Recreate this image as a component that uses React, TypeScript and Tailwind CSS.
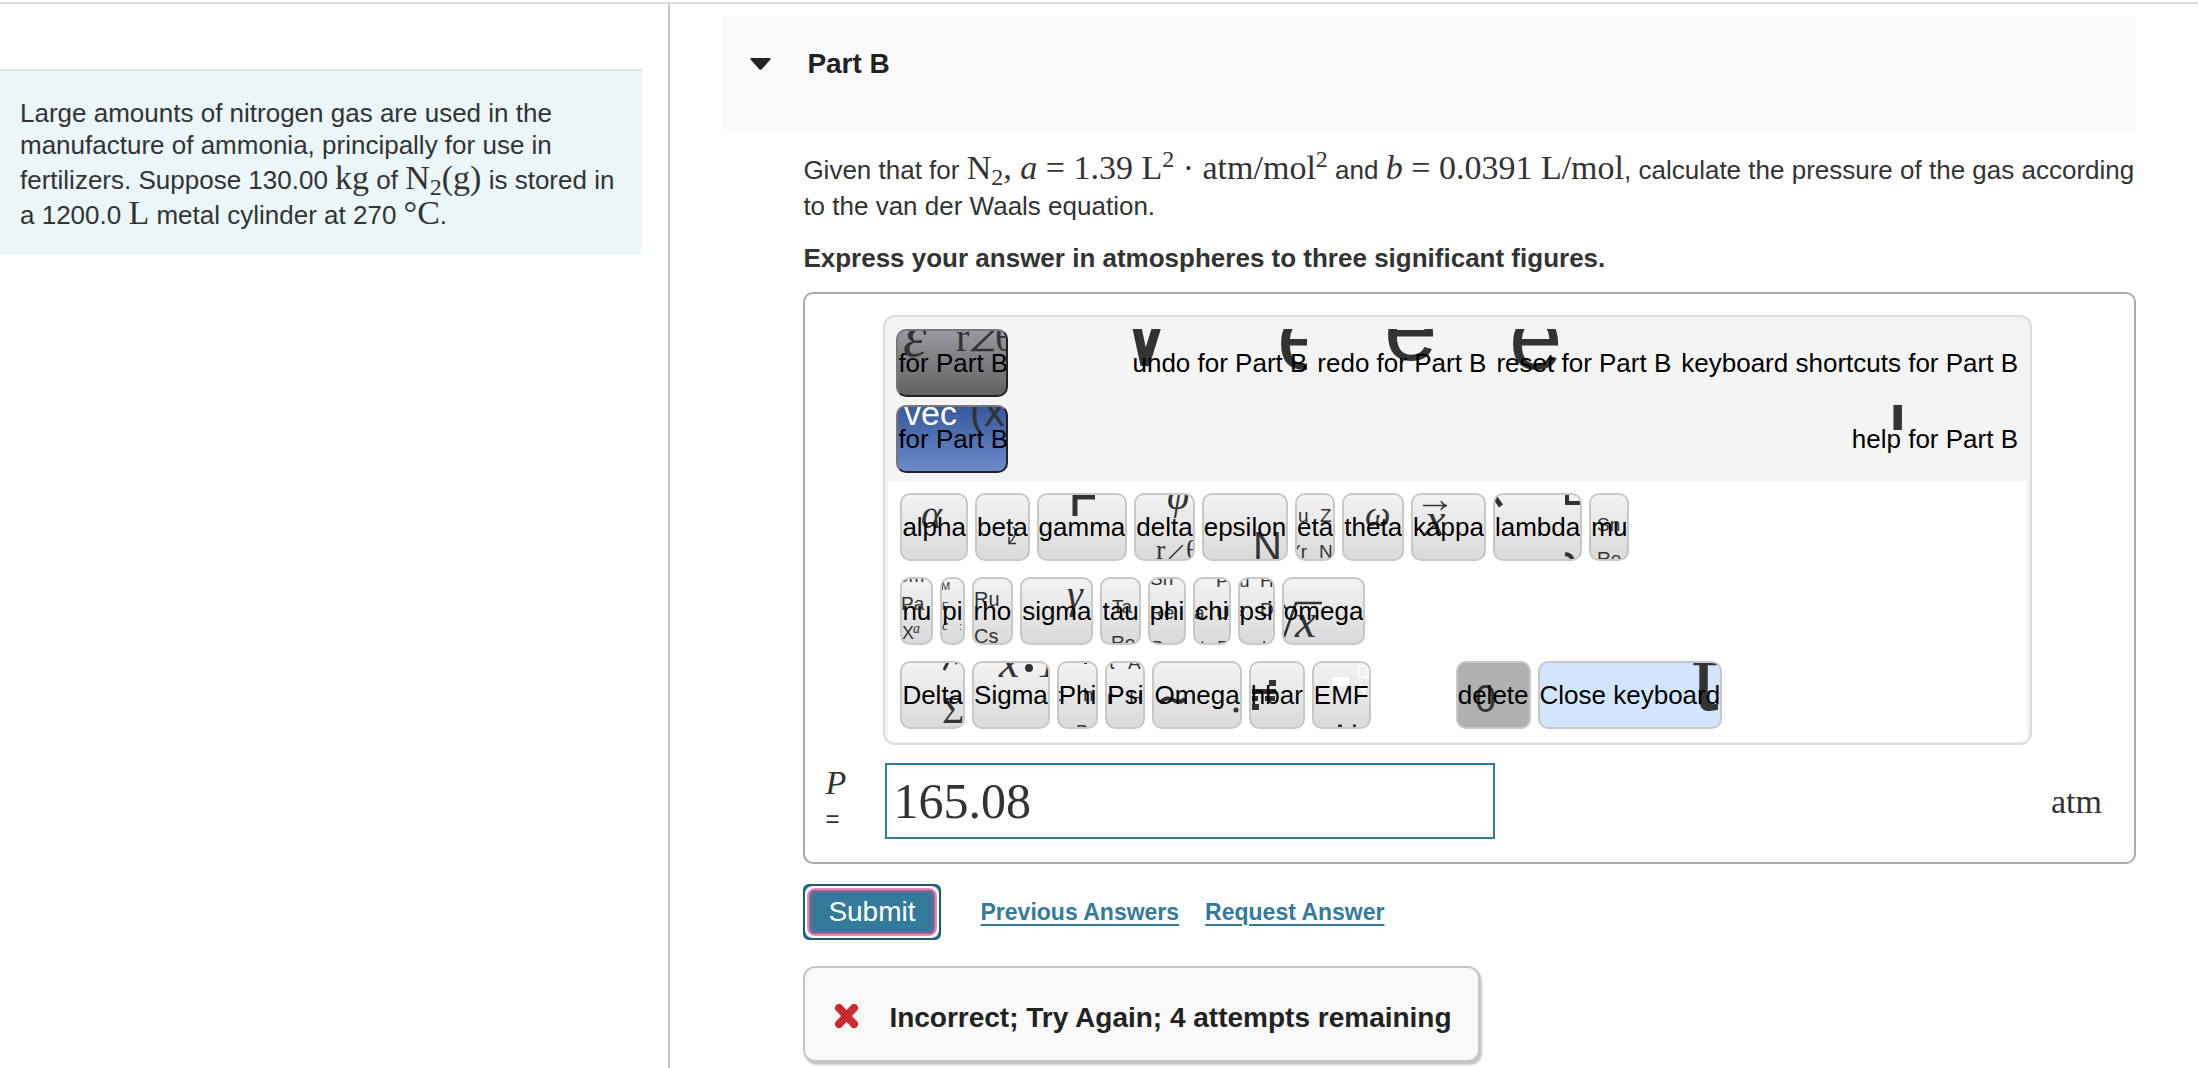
/**
 * Homework item page: problem statement on the left, answer part on the right
 * with the math keyboard, the answer field and the grading feedback.
 */
import { useState, type ReactNode } from "react";
import clsx from "clsx";

type Glyph = {
  text: string;
  x: number;
  y: number;
  size: number;
  font?: "serif" | "italic";
  fill?: string;
};

interface KeyDef {
  label: string;
  glyphs?: Glyph[];
  art?: ReactNode;
}

const INK = "#333333";

// Symbol artwork painted behind a key label. Clipped by the key itself.
function Sprite({ glyphs = [], art }: { glyphs?: Glyph[]; art?: ReactNode }) {
  return (
    <svg className="pointer-events-none absolute inset-0 h-full w-full" aria-hidden="true">
      {glyphs.map((g) => (
        <text
          key={`${g.text}-${g.x}-${g.y}`}
          x={g.x}
          y={g.y}
          fontSize={g.size}
          fill={g.fill ?? INK}
          fontFamily={g.font ? "Liberation Serif, serif" : "Liberation Sans, sans-serif"}
          fontStyle={g.font === "italic" ? "italic" : "normal"}
        >
          {g.text}
        </text>
      ))}
      <g fill="none" stroke={INK}>
        {art}
      </g>
    </svg>
  );
}

const tabs: (KeyDef & { tone: string })[] = [
  {
    label: "for Part B",
    tone: "from-[#9a98a0] to-[#626262]",
    glyphs: [
      { text: "ε", x: 5, y: 25, size: 60, font: "italic" },
      { text: "r", x: 58, y: 20, size: 40, font: "serif" },
      { text: "θ", x: 97, y: 20, size: 40, font: "serif" },
    ],
    art: <path d="M96 -1 L75 19 H96" strokeWidth="2.5" />,
  },
  {
    label: "for Part B",
    tone: "from-[#38599b] to-[#6b8bcb]",
    glyphs: [
      { text: "vec", x: 6, y: 18, size: 34, fill: "#ffffff" },
      { text: "(x", x: 72, y: 19, size: 42 },
    ],
  },
];

const tools: KeyDef[] = [
  {
    label: "undo for Part B",
    glyphs: [{ text: "e", x: 145, y: 40, size: 96 }],
    art: <path d="M5 -1 L13 36 L25 -3" strokeWidth="9" strokeLinejoin="bevel" />,
  },
  { label: "redo for Part B", glyphs: [{ text: "e", x: 67, y: 31, size: 96 }] },
  { label: "reset for Part B", glyphs: [{ text: "e", x: 13, y: 40, size: 96 }] },
  { label: "keyboard shortcuts for Part B" },
];

const helpTool: KeyDef = {
  label: "help for Part B",
  glyphs: [{ text: "l", x: 35, y: 25, size: 96 }],
};

const lowerRow: KeyDef[] = [
  { label: "alpha", glyphs: [{ text: "α", x: 19, y: 33, size: 40, font: "italic" }] },
  { label: "beta", art: <path d="M36 32 C41 36 38 43 32 48 M32 42 V48.5 H39" strokeWidth="1.5" /> },
  { label: "gamma", art: <path d="M36 21 V2 H56" strokeWidth="5" /> },
  {
    label: "delta",
    glyphs: [
      { text: "φ", x: 31, y: 14, size: 40, font: "italic" },
      { text: "r", x: 20, y: 64, size: 28, font: "serif" },
      { text: "θ", x: 50, y: 64, size: 28, font: "serif" },
    ],
    art: <path d="M33 64 L47 50" strokeWidth="1.5" />,
  },
  { label: "epsilon", glyphs: [{ text: "N", x: 49, y: 65, size: 40 }] },
  {
    label: "eta",
    glyphs: [
      { text: "u", x: 1, y: 27, size: 19 },
      { text: "Z", x: 23, y: 27, size: 19 },
      { text: "Yr", x: -9, y: 63, size: 19 },
      { text: "N", x: 22, y: 63, size: 19 },
    ],
  },
  { label: "theta", glyphs: [{ text: "ω", x: 21, y: 31, size: 36, font: "italic" }] },
  {
    label: "kappa",
    glyphs: [{ text: "x", x: 12, y: 40, size: 46, font: "italic" }],
    art: <path d="M10 10.5 H34 M28 6 Q30 10 34 10.5 Q30 11 28 15" strokeWidth="1.5" />,
  },
  {
    label: "lambda",
    art: (
      <>
        <path d="M-1 1 L6 11" strokeWidth="5" />
        <path d="M72 -2 V8 H86" strokeWidth="4" />
        <path d="M70 59 Q77 60 78 66" strokeWidth="4" />
      </>
    ),
  },
  {
    label: "mu",
    glyphs: [
      { text: "Sn", x: 6, y: 36, size: 19 },
      { text: "Re", x: 6, y: 70, size: 19 },
    ],
  },
];

const middleRow: KeyDef[] = [
  {
    label: "nu",
    glyphs: [
      { text: "om", x: -4, y: 3, size: 19 },
      { text: "Pa", x: -1, y: 31, size: 19 },
      { text: "X", x: 0, y: 60, size: 18 },
      { text: "a", x: 11, y: 54, size: 14, font: "italic" },
    ],
  },
  {
    label: "pi",
    glyphs: [
      { text: "M", x: -1, y: 11, size: 11 },
      { text: "F", x: 0, y: 31, size: 11 },
      { text: "c", x: 0, y: 51, size: 14, font: "italic" },
      { text: ":", x: 17, y: 51, size: 11 },
    ],
  },
  {
    label: "rho",
    glyphs: [
      { text: "Ru", x: 0, y: 27, size: 20 },
      { text: "Cs", x: 0, y: 64, size: 20 },
    ],
  },
  { label: "sigma", glyphs: [{ text: "γ", x: 45, y: 29, size: 40, font: "italic" }] },
  {
    label: "tau",
    glyphs: [
      { text: "Ta", x: 10, y: 34, size: 19 },
      { text: "Re", x: 9, y: 70, size: 19 },
    ],
  },
  {
    label: "phi",
    glyphs: [
      { text: "Sn", x: 0, y: 6, size: 19 },
      { text: "Re", x: 0, y: 40, size: 19 },
      { text: "B", x: 1, y: 75, size: 19 },
    ],
  },
  {
    label: "chi",
    glyphs: [
      { text: "P", x: 21, y: 8, size: 19 },
      { text: "a", x: -1, y: 40, size: 19 },
      { text: "U", x: 21, y: 40, size: 19 },
      { text: "t", x: 5, y: 74, size: 19 },
      { text: "F", x: 22, y: 75, size: 19 },
    ],
  },
  {
    label: "psi",
    glyphs: [
      { text: "u", x: -1, y: 8, size: 19 },
      { text: "H", x: 20, y: 8, size: 19 },
      { text: "s", x: -6, y: 37, size: 19 },
      { text: "D", x: 20, y: 37, size: 19 },
      { text: "l", x: 22, y: 75, size: 19 },
    ],
  },
  {
    label: "omega",
    glyphs: [{ text: "x", x: 11, y: 58, size: 48, font: "italic" }],
    art: (
      <>
        <path d="M-1 25 L2 30" strokeWidth="2" />
        <path d="M0 58 L12 24 H38" strokeWidth="2.5" />
      </>
    ),
  },
];

const upperRow: KeyDef[] = [
  {
    label: "Delta",
    glyphs: [{ text: "Σ", x: 40, y: 60, size: 38, font: "serif" }],
    art: <path d="M42 7 L46 -1 M54 -1 L55 1" strokeWidth="3" />,
  },
  {
    label: "Sigma",
    glyphs: [
      { text: "x", x: 25, y: 14, size: 46, font: "italic" },
      { text: "1", x: 64, y: 14, size: 40, font: "italic" },
    ],
    art: <circle cx="55" cy="5" r="4" fill={INK} stroke="none" />,
  },
  {
    label: "Phi",
    glyphs: [
      { text: ":", x: -2, y: 38, size: 19 },
      { text: "h", x: 24, y: 38, size: 19 },
      { text: "B", x: 17, y: 75, size: 19 },
    ],
    art: <path d="M25 0 H28" strokeWidth="2" />,
  },
  {
    label: "Psi",
    glyphs: [
      { text: "t", x: 2, y: 6, size: 20 },
      { text: "A", x: 21, y: 6, size: 19 },
      { text: "r", x: 0, y: 41, size: 19 },
      { text: "H", x: 22, y: 41, size: 19 },
    ],
  },
  {
    label: "Omega",
    art: (
      <>
        <path d="M6 40 Q12 33 19 37 Q26 41 31 36" strokeWidth="4" />
        <circle cx="82" cy="47" r="2.5" fill={INK} stroke="none" />
      </>
    ),
  },
  {
    label: "hbar",
    art: (
      <g fill={INK} stroke="none">
        <rect x="18" y="17" width="7" height="6" />
        <rect x="1" y="26" width="24" height="5" />
        <rect x="1" y="33" width="6" height="5" />
        <rect x="14" y="33" width="10" height="5" />
        <rect x="1" y="41" width="7" height="6" />
      </g>
    ),
  },
  {
    label: "EMF",
    art: (
      <>
        <g fill="#ffffff" stroke="none">
          <rect x="18" y="14" width="17" height="9" />
          <path d="M45 20 L52 25 L50 33 Z" />
        </g>
        <rect x="45" y="3" width="9" height="11" stroke="#ffffff" strokeWidth="1.5" />
        <path d="M24 63 H28 M39 63 H42" strokeWidth="3" />
      </>
    ),
  },
];

const deleteKey: KeyDef = { label: "delete", glyphs: [{ text: "0", x: 17, y: 49, size: 38 }] };
const closeKey: KeyDef = { label: "Close keyboard", glyphs: [{ text: "t", x: 152, y: 47, size: 96 }] };

function Key({ def, tone }: { def: KeyDef; tone?: string }) {
  return (
    <button
      type="button"
      className={clsx(
        "relative h-17 overflow-hidden rounded-[10px] border-2 border-[#c8c8c8] whitespace-nowrap",
        tone ?? "bg-linear-to-b from-[#f3f3f3] to-[#dadada]",
      )}
    >
      <Sprite glyphs={def.glyphs} art={def.art} />
      <span className="relative">{def.label}</span>
    </button>
  );
}

function Tool({ def }: { def: KeyDef }) {
  return (
    <button type="button" className="relative h-17 overflow-hidden whitespace-nowrap">
      <Sprite glyphs={def.glyphs} art={def.art} />
      <span className="relative">{def.label}</span>
    </button>
  );
}

function MathKeyboard() {
  return (
    <div className="mr-[102px] ml-[78px] overflow-hidden rounded-xl border-2 border-[#dcdcdc] bg-[#f4f4f4] px-[3px] pt-1 pb-[2px] text-[26px] text-black">
      <div className="flex justify-between p-2">
        <div className="flex flex-col gap-2">
          {tabs.map((tab) => (
            <button
              key={tab.tone}
              type="button"
              className={clsx(
                "relative h-17 w-28 overflow-hidden rounded-[10px] border-2 border-t-[#777] border-r-[#222] border-b-[#222] border-l-[#777] bg-linear-to-b whitespace-nowrap",
                tab.tone,
              )}
            >
              <Sprite glyphs={tab.glyphs} art={tab.art} />
              <span className="relative">{tab.label}</span>
            </button>
          ))}
        </div>
        <div className="flex flex-col items-end gap-2 pr-px">
          <div className="flex gap-[10px]">
            {tools.map((tool) => (
              <Tool key={tool.label} def={tool} />
            ))}
          </div>
          <Tool def={helpTool} />
        </div>
      </div>

      <div className="flex flex-col gap-4 bg-white p-3">
        <div className="flex gap-[7px]">
          {lowerRow.map((k) => (
            <Key key={k.label} def={k} />
          ))}
        </div>
        <div className="flex gap-[7px]">
          {middleRow.map((k) => (
            <Key key={k.label} def={k} />
          ))}
        </div>
        <div className="flex gap-[7px]">
          {upperRow.map((k) => (
            <Key key={k.label} def={k} />
          ))}
          <div className="ml-[78px] flex gap-[7px]">
            <Key def={deleteKey} tone="bg-[#b0b0b0]" />
            <Key def={closeKey} tone="bg-[#d3e4fd]" />
          </div>
        </div>
      </div>
    </div>
  );
}

function Tex({ children }: { children: ReactNode }) {
  return (
    <span className="font-['Liberation_Serif',serif] text-[34px] leading-none whitespace-nowrap">
      {children}
    </span>
  );
}

function Sub({ children }: { children: ReactNode }) {
  return <sub className="text-[24px]">{children}</sub>;
}

function Sup({ children }: { children: ReactNode }) {
  return <sup className="text-[24px]">{children}</sup>;
}

export default function App() {
  const [answer, setAnswer] = useState("165.08");

  return (
    <div className="flex min-h-screen flex-col bg-white pt-[2px] font-['Liberation_Sans',Arial,sans-serif] text-[26px] text-[#333]">
      <div className="flex flex-1 border-t-2 border-[#dcdcdc]">
        <aside className="w-[30.5%] shrink-0 border-r-2 border-[#b9c9de] pt-[65px] pr-[26px]">
          <p className="border-t-2 border-[#dcdcdc] bg-[#eaf6f8] px-5 pt-[26px] pb-6 leading-8">
            Large amounts of nitrogen gas are used in the manufacture of ammonia, principally for use in
            fertilizers. Suppose 130.00 <Tex>kg</Tex> of{" "}
            <Tex>
              N<Sub>2</Sub>(g)
            </Tex>{" "}
            is stored in a 1200.0 <Tex>L</Tex> metal cylinder at 270 <Tex>°C</Tex>.
          </p>
        </aside>

        <main className="min-w-0 flex-1 pt-3 pr-[62px] pl-[52px]">
          <header className="flex h-[113px] items-start bg-[#f9f9f9] pt-8 pl-7">
            <button type="button" className="flex items-center gap-9 text-[28px] leading-8 font-bold text-[#222]">
              <svg width="21" height="12" viewBox="0 0 21 12" fill="#222" aria-hidden="true">
                <path d="M1.5 0 H19.5 Q21.5 0 20 2 L12 11 Q10.5 12.5 9 11 L1 2 Q-.5 0 1.5 0 Z" />
              </svg>
              Part B
            </button>
          </header>

          <div className="pt-[22px] pl-[81px]">
            <p className="leading-9">
              Given that for{" "}
              <Tex>
                N<Sub>2</Sub>, <i>a</i> = 1.39 L<Sup>2</Sup> · atm/mol<Sup>2</Sup>
              </Tex>{" "}
              and{" "}
              <Tex>
                <i>b</i> = 0.0391 L/mol
              </Tex>
              , calculate the pressure of the gas according to the van der Waals equation.
            </p>
            <p className="mt-4 leading-9 font-bold">
              Express your answer in atmospheres to three significant figures.
            </p>

            <section className="mt-4 rounded-[10px] border-2 border-[#aaa] pt-[21px] pb-[23px]">
              <MathKeyboard />
              <div className="mt-[18px] flex items-center pr-8">
                <label htmlFor="answer" className="flex w-20 flex-col pl-5 text-[24px] leading-9">
                  <i className="font-['Liberation_Serif',serif] text-[34px]">P</i>
                  <span>=</span>
                </label>
                <input
                  id="answer"
                  type="text"
                  value={answer}
                  onChange={(e) => setAnswer(e.target.value)}
                  className="h-19 w-[47%] border-2 border-[#357b9b] bg-white px-[6px] font-['Liberation_Serif',serif] text-[50px] outline-none"
                />
                <span className="ml-auto font-['Liberation_Serif',serif] text-[34px]">atm</span>
              </div>
            </section>

            <div className="mt-5 flex items-center">
              <button
                type="button"
                className="rounded-md border-2 border-[#225a73] bg-[#347a9b] text-[28px] leading-8 text-white"
              >
                <span className="block rounded-lg border-2 border-white bg-white">
                  <span className="block rounded-lg border-2 border-[#e68ab8] bg-[#347a9b]">
                    <span className="block rounded-md border-2 border-[#a95c93] px-[17px] py-1">Submit</span>
                  </span>
                </span>
              </button>
              <nav className="ml-10 flex gap-[26px] text-[23px] font-bold text-[#347a9b]">
                <a href="#previous" className="underline decoration-2 underline-offset-4">
                  Previous Answers
                </a>
                <a href="#request" className="underline decoration-2 underline-offset-4">
                  Request Answer
                </a>
              </nav>
            </div>

            <div
              role="status"
              className="mt-[26px] inline-flex items-center rounded-xl border-2 border-[#c6c6c6] bg-[#f9f9f9] pt-8 pr-[26px] pb-6 pl-7 text-[28px] leading-9 font-bold text-[#222] shadow-[2px_3px_2px_#c6c6c6]"
            >
              <svg width="28" height="28" viewBox="0 0 28 28" aria-hidden="true">
                <path d="M6 4 L21 20 M21 4 L6 20" stroke="#cb2a2e" strokeWidth="8" strokeLinecap="round" />
              </svg>
              <span className="ml-7">Incorrect; Try Again; 4 attempts remaining</span>
            </div>
          </div>
        </main>
      </div>
    </div>
  );
}
